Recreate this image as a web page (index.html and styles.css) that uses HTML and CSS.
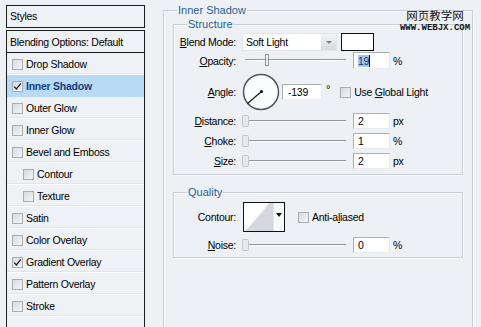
FILE: index.html
```html
<!DOCTYPE html>
<html lang="en">
<head>
    <meta charset="UTF-8" />
    <title>Layer Style</title>
    <link rel="stylesheet" href="styles.css">
</head>
<body>
<div class="dialog">
    <aside class="styles-panel">
        <div class="styles-head">Styles</div>
        <div class="styles-list">
            <div class="item blending">Blending Options: Default</div>
            <div class="item"><span class="cb"></span>Drop Shadow</div>
            <div class="item active"><span class="cb"><svg width="9" height="9" viewBox="0 0 9 9"><path d="M1.2 4.6 L3.4 7 L7.8 1.4" fill="none" stroke="#1e1e1e" stroke-width="1.3"/></svg></span>Inner Shadow</div>
            <div class="item"><span class="cb"></span>Outer Glow</div>
            <div class="item"><span class="cb"></span>Inner Glow</div>
            <div class="item"><span class="cb"></span>Bevel and Emboss</div>
            <div class="item sub"><span class="cb"></span>Contour</div>
            <div class="item sub"><span class="cb"></span>Texture</div>
            <div class="item"><span class="cb"></span>Satin</div>
            <div class="item"><span class="cb"></span>Color Overlay</div>
            <div class="item"><span class="cb"><svg width="9" height="9" viewBox="0 0 9 9"><path d="M1.2 4.6 L3.4 7 L7.8 1.4" fill="none" stroke="#1e1e1e" stroke-width="1.3"/></svg></span>Gradient Overlay</div>
            <div class="item"><span class="cb"></span>Pattern Overlay</div>
            <div class="item"><span class="cb"></span>Stroke</div>
            <div class="item empty"></div>
        </div>
    </aside>

    <main class="options">
        <fieldset class="group main-group">
            <legend>Inner Shadow</legend>

            <fieldset class="group sub-group structure">
                <legend>Structure</legend>

                <div class="row blend-row">
                    <span class="lbl"><u>B</u>lend Mode:</span>
                    <div class="select">
                        <span class="select-value">Soft Light</span>
                        <span class="select-btn"><i class="arrow"></i></span>
                    </div>
                    <span class="swatch"></span>
                </div>

                <div class="row opacity-row">
                    <span class="lbl"><u>O</u>pacity:</span>
                    <svg class="slider" width="104" height="16" viewBox="0 0 104 16">
                        <line x1="3" y1="6.5" x2="104" y2="6.5" stroke="#8f969d"/>
                        <line x1="3" y1="7.5" x2="104" y2="7.5" stroke="#ffffff"/>
                        <rect x="23.5" y="1.5" width="3" height="11" fill="#f1f3f5" stroke="#8f969d"/>
                    </svg>
                    <div class="num"><span class="sel">19</span><span class="caret"></span></div>
                    <span class="unit">%</span>
                </div>

                <div class="row angle-row">
                    <span class="lbl"><u>A</u>ngle:</span>
                    <svg class="dial" width="38" height="38" viewBox="0 0 38 38">
                        <circle cx="19" cy="19" r="17.5" fill="#fbfcfd" stroke="#50565c" stroke-width="1.5"/>
                        <line x1="19.5" y1="18.5" x2="5.5" y2="30.5" stroke="#111" stroke-width="1.1"/>
                        <circle cx="19.5" cy="18.5" r="1.6" fill="#111"/>
                    </svg>
                    <div class="num angle-num">-139</div>
                    <span class="deg">°</span>
                    <span class="cb global-cb"></span>
                    <span>Use <u>G</u>lobal Light</span>
                </div>

                <div class="row small-row first-small">
                    <span class="lbl"><u>D</u>istance:</span>
                    <svg class="slider" width="104" height="16" viewBox="0 0 104 16">
                        <line x1="6" y1="7.5" x2="104" y2="7.5" stroke="#8f969d"/>
                        <line x1="6" y1="8.5" x2="104" y2="8.5" stroke="#ffffff"/>
                        <rect x="0.5" y="2.5" width="6" height="11" rx="1" fill="#e6e9ec" stroke="#c3c8ce"/>
                    </svg>
                    <div class="num">2</div>
                    <span class="unit">px</span>
                </div>

                <div class="row small-row">
                    <span class="lbl"><u>C</u>hoke:</span>
                    <svg class="slider" width="104" height="16" viewBox="0 0 104 16">
                        <line x1="6" y1="7.5" x2="104" y2="7.5" stroke="#8f969d"/>
                        <line x1="6" y1="8.5" x2="104" y2="8.5" stroke="#ffffff"/>
                        <rect x="0.5" y="2.5" width="6" height="11" rx="1" fill="#e6e9ec" stroke="#c3c8ce"/>
                    </svg>
                    <div class="num">1</div>
                    <span class="unit">%</span>
                </div>

                <div class="row small-row">
                    <span class="lbl"><u>S</u>ize:</span>
                    <svg class="slider" width="104" height="16" viewBox="0 0 104 16">
                        <line x1="6" y1="7.5" x2="104" y2="7.5" stroke="#8f969d"/>
                        <line x1="6" y1="8.5" x2="104" y2="8.5" stroke="#ffffff"/>
                        <rect x="0.5" y="2.5" width="6" height="11" rx="1" fill="#e6e9ec" stroke="#c3c8ce"/>
                    </svg>
                    <div class="num">2</div>
                    <span class="unit">px</span>
                </div>
            </fieldset>

            <fieldset class="group sub-group quality">
                <legend>Quality</legend>

                <div class="row contour-row">
                    <span class="lbl">Contour:</span>
                    <div class="contour">
                        <svg width="29" height="28" viewBox="0 0 29 28">
                            <rect width="29" height="28" fill="#ffffff"/>
                            <path d="M1 28 C9 20 18 9 25 0 L29 0 L29 28 Z" fill="#d4d8de"/>
                        </svg>
                        <span class="contour-btn"><i class="arrow dark"></i></span>
                    </div>
                    <span class="cb aa-cb"></span>
                    <span>Anti-a<u>l</u>iased</span>
                </div>

                <div class="row small-row noise-row">
                    <span class="lbl"><u>N</u>oise:</span>
                    <svg class="slider" width="104" height="16" viewBox="0 0 104 16">
                        <line x1="6" y1="7.5" x2="104" y2="7.5" stroke="#8f969d"/>
                        <line x1="6" y1="8.5" x2="104" y2="8.5" stroke="#ffffff"/>
                        <rect x="0.5" y="2.5" width="6" height="11" rx="1" fill="#e6e9ec" stroke="#c3c8ce"/>
                    </svg>
                    <div class="num">0</div>
                    <span class="unit">%</span>
                </div>
            </fieldset>
        </fieldset>
    </main>

    <div class="watermark">
        <div class="wm-cn">网页教学网</div>
        <div class="wm-url">WWW.WEBJX.COM</div>
    </div>
</div>
</body>
</html>
```

FILE: styles.css
```css
body {
    margin: 0;
    width: 481px;
    height: 327px;
    overflow: hidden;
    background: #edf0f4;
    font-family: "Liberation Sans", Arial, sans-serif;
    font-size: 10.5px;
    letter-spacing: -0.25px;
    color: #000;
}
u {
    text-decoration: underline;
    text-underline-offset: 1px;
}
.dialog {
    position: relative;
    display: flex;
    align-items: flex-start;
    height: 327px;
    overflow: hidden;
}

/* left list */
.styles-panel {
    flex: none;
    width: 139px;
    margin: 5px 0 0 6px;
}
.styles-head {
    height: 23px;
    box-sizing: border-box;
    border: 1px solid #1c1c1c;
    padding-left: 3px;
    line-height: 21px;
    background: #eef1f5;
}
.styles-list {
    margin-top: 2px;
    border: 1px solid #1c1c1c;
    border-bottom: none;
    background: #eef1f5;
}
.item {
    display: flex;
    align-items: center;
    height: 22px;
    box-sizing: border-box;
    padding-left: 5px;
    box-shadow: inset 0 -1px #fbfcfd, inset 0 -2px #e1e5ea;
}
.item.blending {
    height: 22px;
    padding-left: 3px;
    box-shadow: none;
    border-bottom: 1px solid #1c1c1c;
}
.item.sub {
    padding-left: 16px;
}
.item.active {
    background: #b9daf5;
    color: #17407e;
    font-weight: bold;
    box-shadow: none;
}
.item.empty {
    height: 40px;
    box-shadow: none;
}
.cb {
    flex: none;
    display: flex;
    align-items: center;
    justify-content: center;
    width: 11px;
    height: 11px;
    box-sizing: border-box;
    margin-right: 3px;
    border: 1px solid #a6adb5;
    background: linear-gradient(135deg, #d6dbe1, #f4f6f8);
}

/* right options */
.options {
    flex: none;
    width: 310px;
    margin-left: 18px;
}
.group {
    margin: 0;
    min-width: 0;
    border: 1px solid #c7cdd5;
    box-shadow: 1px 1px 0 #fbfcfd, inset 1px 1px 0 #fbfcfd;
}
.group legend {
    padding: 0 1px;
    font-size: 11px;
    letter-spacing: 0;
    line-height: 13px;
    color: #1f5e9e;
}
.main-group {
    margin-top: 4px;
    padding: 1px 9px 0;
    height: 400px;
    border-bottom: none;
}
.main-group > legend {
    margin-left: 4px;
}
.sub-group {
    padding: 0;
}
.sub-group > legend {
    margin-left: 13px;
}
.structure {
    padding-bottom: 5px;
}
.quality {
    margin-top: 11px;
    padding-bottom: 4px;
}

.row {
    display: flex;
    align-items: center;
    white-space: nowrap;
}
.lbl {
    flex: none;
    width: 62px;
    margin-right: 6px;
    text-align: right;
}
.blend-row {
    height: 18px;
    margin-top: 2px;
}
.opacity-row {
    height: 17px;
    margin-top: 1px;
}
.angle-row {
    height: 38px;
    margin-top: 4px;
}
.small-row {
    height: 16px;
    margin-top: 4px;
}
.small-row.first-small {
    margin-top: 2px;
}
.contour-row {
    height: 30px;
    margin-top: 3px;
}
.noise-row {
    margin-top: 5px;
}

.select {
    flex: none;
    display: flex;
    width: 95px;
    height: 18px;
    box-sizing: border-box;
    border: 1px solid #e2e6ea;
    background: #fff;
}
.select-value {
    flex: 1;
    padding-left: 3px;
    line-height: 16px;
}
.select-btn {
    display: flex;
    align-items: center;
    justify-content: center;
    width: 15px;
    background: linear-gradient(#f3f4f6, #d6dadf);
}
.arrow {
    width: 0;
    height: 0;
    border-left: 3.5px solid transparent;
    border-right: 3.5px solid transparent;
    border-top: 3px solid #7a8088;
}
.arrow.dark {
    border-top: 4px solid #111;
}
.swatch {
    flex: none;
    width: 33px;
    height: 18px;
    box-sizing: border-box;
    margin-left: 4px;
    border: 1px solid #111;
    background: #fff;
}

.slider {
    flex: none;
    margin-right: 7px;
}
.num {
    flex: none;
    display: flex;
    align-items: center;
    width: 37px;
    height: 16px;
    box-sizing: border-box;
    padding-left: 4px;
    border: 1px solid;
    border-color: #aab0b7 #e9ecef #e9ecef #aab0b7;
    background: #fff;
}
.opacity-row .num {
    height: 17px;
}
.sel {
    background: #a7c5ea;
    color: #15347a;
    line-height: 12px;
}
.caret {
    width: 1px;
    height: 12px;
    background: #000;
}
.unit {
    margin-left: 3px;
}

.dial {
    flex: none;
}
.angle-num {
    width: 40px;
    margin-left: 2px;
    padding-left: 5px;
}
.deg {
    margin-left: 4px;
    align-self: flex-start;
    margin-top: 10px;
    font-size: 11px;
}
.global-cb {
    margin-left: 10px;
}

.contour {
    flex: none;
    display: flex;
    width: 42px;
    height: 30px;
    box-sizing: border-box;
    margin-left: 1px;
    border: 1px solid #111;
    background: #fff;
}
.contour-btn {
    flex: 1;
    display: flex;
    justify-content: center;
    padding-top: 10px;
    border-left: 1px solid #e4e7ea;
    background: #f7f8fa;
}
.aa-cb {
    margin-left: 13px;
}

.watermark {
    position: absolute;
    top: 9px;
    left: 399px;
    width: 72px;
    text-align: center;
    letter-spacing: 0;
    color: #111;
}
.wm-cn {
    font-family: "Noto Sans CJK SC", sans-serif;
    font-size: 11.5px;
    line-height: 13px;
}
.wm-url {
    margin-top: 2px;
    font-family: "Liberation Mono", monospace;
    font-weight: bold;
    font-size: 9px;
    line-height: 8px;
}
```
